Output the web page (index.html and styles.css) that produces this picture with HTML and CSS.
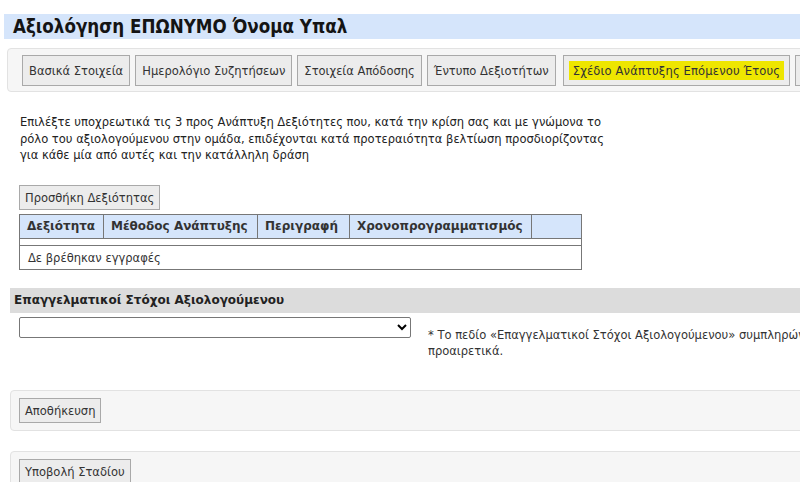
FILE: index.html
```html
<!DOCTYPE html>
<html lang="el">
<head>
<meta charset="utf-8">
<title>Αξιολόγηση</title>
<link rel="stylesheet" href="styles.css">
</head>
<body>
<div class="page">
  <h1 class="title">Αξιολόγηση ΕΠΩΝΥΜΟ Όνομα Υπαλ</h1>

  <div class="tabs">
    <button class="btn tab">Βασικά Στοιχεία</button>
    <button class="btn tab">Ημερολόγιο Συζητήσεων</button>
    <button class="btn tab">Στοιχεία Απόδοσης</button>
    <button class="btn tab">Έντυπο Δεξιοτήτων</button>
    <button class="btn tab active"><span class="mark">Σχέδιο Ανάπτυξης Επόμενου Έτους</span></button>
    <button class="btn tab">Υπογραφές</button>
  </div>

  <p class="intro">Επιλέξτε υποχρεωτικά τις 3 προς Ανάπτυξη Δεξιότητες που, κατά την κρίση σας και με γνώμονα το ρόλο του αξιολογούμενου στην ομάδα, επιδέχονται κατά προτεραιότητα βελτίωση προσδιορίζοντας για κάθε μία από αυτές και την κατάλληλη δράση</p>

  <button class="btn small add">Προσθήκη Δεξιότητας</button>
  <table class="grid">
    <thead>
      <tr>
        <th class="c1">Δεξιότητα</th>
        <th class="c2">Μέθοδος Ανάπτυξης</th>
        <th class="c3">Περιγραφή</th>
        <th class="c4">Χρονοπρογραμματισμός</th>
        <th class="c5"></th>
      </tr>
    </thead>
    <tbody>
      <tr class="spacer"><td colspan="5"></td></tr>
      <tr class="empty"><td colspan="5">Δε βρέθηκαν εγγραφές</td></tr>
    </tbody>
  </table>

  <h2 class="section">Επαγγελματικοί Στόχοι Αξιολογούμενου</h2>
  <div class="goals">
    <select class="select"><option></option></select>
    <p class="note">* Το πεδίο «Επαγγελματικοί Στόχοι Αξιολογούμενου» συμπληρώνεται προαιρετικά.</p>
  </div>

  <div class="panel first">
    <button class="btn small">Αποθήκευση</button>
  </div>
  <div class="panel">
    <button class="btn small">Υποβολή Σταδίου</button>
  </div>
</div>
</body>
</html>
```

FILE: styles.css
```css
html, body {
  margin: 0;
  padding: 0;
  background: #fff;
  overflow: hidden;
}

body {
  font-family: "DejaVu Sans Condensed", "DejaVu Sans", sans-serif;
  font-size: 12.8px;
  color: #333;
}

.page {
  width: 1000px;
  padding-top: 14px;
}

.title {
  margin: 0 0 0 4px;
  height: 25px;
  line-height: 25px;
  padding-left: 9px;
  background: #d5e5fb;
  font-size: 18.6px;
  font-weight: bold;
  color: #141414;
}

.tabs {
  margin: 9px 0 0 7px;
  display: flex;
  gap: 5px;
  padding: 6px 14px 5px;
  background: #f6f6f6;
  border: 1px solid #e2e2e2;
  border-radius: 4px;
  white-space: nowrap;
}

.btn {
  font-family: inherit;
  font-size: 12.8px;
  color: #333;
  background: #ececec;
  border: 1px solid #a9a9a9;
  border-radius: 0;
  cursor: pointer;
}

.tab {
  height: 31px;
  padding: 0 6px;
}

.tab.active {
  margin-left: 2px;
  padding: 0 5px;
}

.mark {
  display: inline-block;
  background: #eee600;
  padding: 2px 4px;
  letter-spacing: 0.15px;
  color: #333;
}

.intro {
  width: 595px;
  margin: 22px 0 0 20px;
  line-height: 16.5px;
  color: #222;
}

.add {
  display: block;
  margin: 21px 0 0 19px;
}

.small {
  height: 25px;
  padding: 0 5px;
}

.grid {
  margin: 4px 0 0 19px;
  width: 563px;
  border-collapse: collapse;
  border: 1px solid #777;
}

.grid th {
  background: #d5e5fb;
  border: 1px solid #777;
  height: 23px;
  padding: 0 7px;
  text-align: left;
  font-family: "DejaVu Sans", sans-serif;
  font-size: 12px;
  font-weight: bold;
  color: #333;
}

.grid .c1 { width: 69px; }
.grid .c2 { width: 139px; }
.grid .c3 { width: 77px; }
.grid .c4 { width: 167px; }

.grid .spacer td {
  height: 6px;
  padding: 0;
  border-bottom: 1px solid #777;
}

.grid .empty td {
  height: 23px;
  padding: 0 8px;
}

.section {
  margin: 18px 0 0 10px;
  height: 25px;
  line-height: 25px;
  padding-left: 4px;
  background: #dcdcdc;
  font-family: "DejaVu Sans", sans-serif;
  font-size: 12px;
  font-weight: bold;
  color: #222;
}

.goals {
  display: flex;
  align-items: flex-start;
  margin: 4px 0 0 19px;
}

.select {
  flex: none;
  width: 392px;
  height: 21px;
  font-family: inherit;
  font-size: 12px;
  border: 1px solid #777;
  border-radius: 2px;
  background: #fff;
}

.note {
  margin: 10px 0 0 17px;
  width: 470px;
  line-height: 16px;
  color: #333;
}

.panel {
  margin: 32px 0 0 10px;
  padding: 7px 8px;
  background: #f6f6f6;
  border: 1px solid #e2e2e2;
  border-radius: 4px;
}

.panel.first {
  margin-top: 31px;
}

.panel + .panel {
  margin-top: 20px;
}
```
